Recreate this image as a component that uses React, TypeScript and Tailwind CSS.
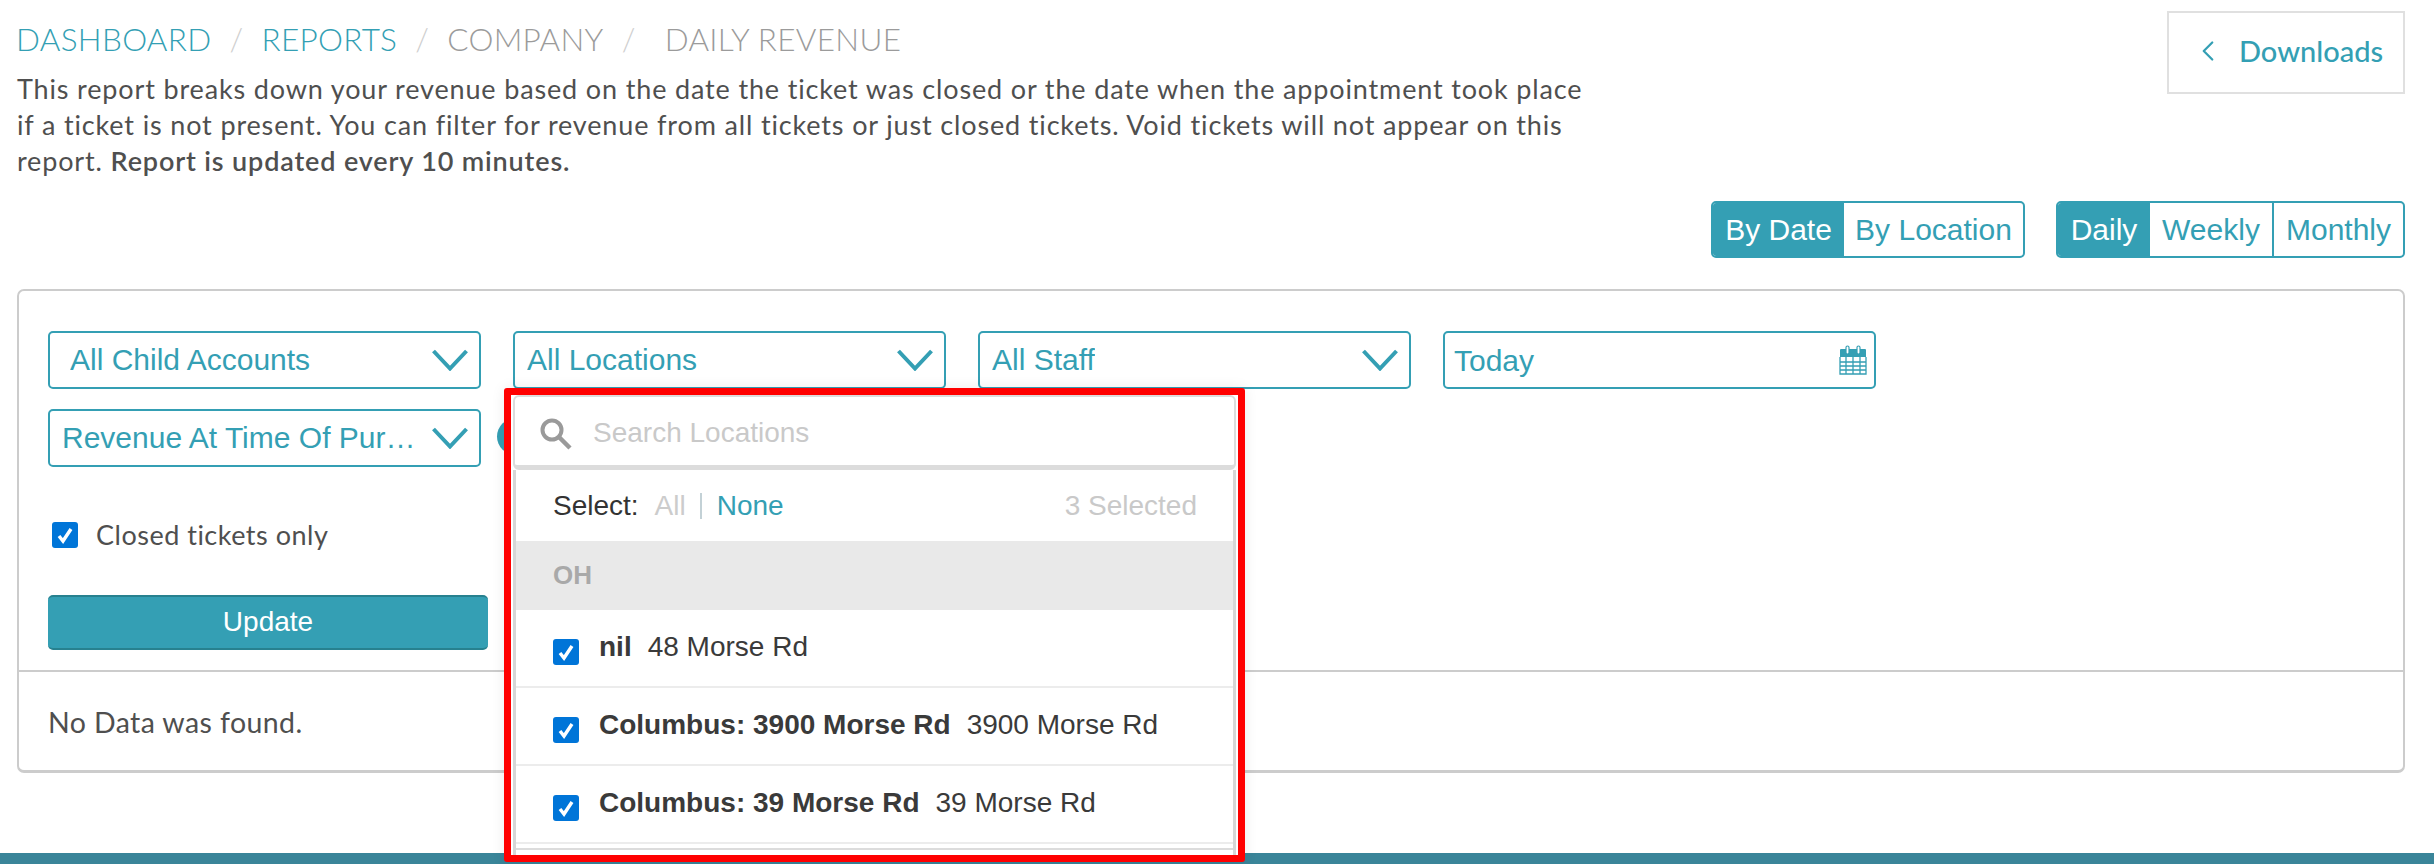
import { ChevronLeft } from "lucide-react";

const lato = "font-['Lato',sans-serif]";
const arial = "font-['Liberation_Sans',Arial,sans-serif]";

// thin "v" used on every dropdown
const Chevron = () => (
  <svg width="36" height="22" viewBox="0 0 36 22" fill="none" className="shrink-0">
    <path d="M1.5 2 L18 19.5 L34.5 2" stroke="#349fb4" strokeWidth="4" />
  </svg>
);

const Select = ({ label, pl }: { label: string; pl: string }) => (
  <div className={`flex h-[58px] w-[433px] items-center justify-between rounded-[5px] border-2 border-[#349fb4] pr-[11px] ${pl}`}>
    <span className={`${arial} mr-[14px] -mt-[2px] truncate text-[30px] text-[#349fb4]`}>{label}</span>
    <Chevron />
  </div>
);

const Calendar = () => (
  <svg width="28" height="30" viewBox="0 0 28 30" className="shrink-0">
    <path d="M1 5 Q1 4 2 4 H26 Q27 4 27 5 V12 H1 Z" fill="#349fb4" />
    <rect x="7" y="1" width="3" height="8" rx="1.5" fill="#fff" stroke="#349fb4" strokeWidth="1.2" />
    <rect x="18" y="1" width="3" height="8" rx="1.5" fill="#fff" stroke="#349fb4" strokeWidth="1.2" />
    <path d="M1 12 V29 H27 V12 M1 17 H27 M1 21 H27 M1 25 H27 M7 12 V29 M14 12 V29 M21 12 V29" fill="none" stroke="#349fb4" strokeWidth="1.3" />
  </svg>
);

const Check = ({ className = "" }: { className?: string }) => (
  <span className={`flex h-[26px] w-[26px] shrink-0 items-center justify-center rounded-[3px] bg-[#0075d8] ${className}`}>
    <svg width="18" height="18" viewBox="0 0 18 18" fill="none">
      <path d="M3 10 L7 15 L15 3" stroke="#fff" strokeWidth="3.4" />
    </svg>
  </span>
);

const Row = ({ name, addr }: { name: string; addr: string }) => (
  <div className="flex h-[78px] items-center gap-[20px] border-b-2 border-[#ececec] pl-[37px]">
    <Check className="mt-[8px]" />
    <span className={`${arial} -mt-[2px] text-[28px] text-[#3a3a3a]`}>
      <b>{name}</b>
      <span className="ml-[16px]">{addr}</span>
    </span>
  </div>
);

export default function App() {
  return (
    <div className="flex h-[864px] w-[2434px] flex-col overflow-hidden bg-white">
      <div className="relative flex-1 pl-[17px] pr-[29px]">
        {/* header */}
        <div className="flex items-start justify-between pt-[11px]">
          <div className="w-[1580px]">
            <div className={`${lato} mb-[2px] -ml-[1px] flex h-[58px] items-center text-[31.5px] font-light uppercase leading-none tracking-[0.3px] text-[#9b9b9b]`}>
              <a className="text-[#349fb4]">Dashboard</a>
              <span className="mx-[18px] text-[#cfcfcf]">/</span>
              <a className="text-[#349fb4]">Reports</a>
              <span className="mx-[18px] text-[#cfcfcf]">/</span>
              <span>Company</span>
              <span className="ml-[18px] mr-[29px] text-[#cfcfcf]">/</span>
              <span>Daily Revenue</span>
            </div>
            <p className={`${lato} text-[27px] leading-[36px] tracking-[0.85px] text-[#4f4f4f]`}>
              This report breaks down your revenue based on the date the ticket was closed or the date when the appointment took place if a ticket is not present. You can filter for revenue from all tickets or just closed tickets. Void tickets will not appear on this report. <b className="font-semibold">Report is updated every 10 minutes.</b>
            </p>
          </div>
          <button className={`${lato} flex h-[83px] w-[238px] items-center gap-[14px] border-2 border-[#e0e0e0] pb-[3px] pl-[22px] text-[29px] font-medium text-[#349fb4]`}>
            <ChevronLeft size={34} strokeWidth={1.6} className="shrink-0" />
            Downloads
          </button>
        </div>

        {/* toggles */}
        <div className={`${arial} mt-[22px] flex justify-end gap-[31px] text-[30px]`}>
          <div className="flex h-[57px] overflow-hidden rounded-[5px] border-2 border-[#349fb4]">
            <span className="flex w-[131px] items-center justify-center bg-[#349fb4] text-white">By Date</span>
            <span className="flex w-[179px] items-center justify-center text-[#349fb4]">By Location</span>
          </div>
          <div className="flex h-[57px] overflow-hidden rounded-[5px] border-2 border-[#349fb4]">
            <span className="flex w-[92px] items-center justify-center bg-[#349fb4] text-white">Daily</span>
            <span className="flex w-[124px] items-center justify-center border-r-2 border-[#349fb4] text-[#349fb4]">Weekly</span>
            <span className="flex w-[129px] items-center justify-center text-[#349fb4]">Monthly</span>
          </div>
        </div>

        {/* report card */}
        <div className="mt-[31px] h-[484px] rounded-[7px] border-2 border-b-[3px] border-[#cccccc]">
          <div className="h-[381px] border-b-2 border-[#cccccc] pl-[29px] pt-[40px]">
            <div className="flex gap-[32px]">
              <Select label="All Child Accounts" pl="pl-[20px]" />
              <Select label="All Locations" pl="pl-[12px]" />
              <Select label="All Staff" pl="pl-[12px]" />
              <div className="flex h-[58px] w-[433px] items-center justify-between rounded-[5px] border-2 border-[#349fb4] pl-[9px] pr-[7px]">
                <span className={`${arial} text-[30px] text-[#349fb4]`}>Today</span>
                <Calendar />
              </div>
            </div>
            <div className="mt-[20px] flex items-center gap-[16px]">
              <Select label="Revenue At Time Of Purchase" pl="pl-[12px]" />
              <span className={`${arial} -mt-[3px] flex h-[37px] w-[37px] items-center justify-center rounded-full bg-[#349fb4] text-[26px] font-bold text-white`}>?</span>
            </div>
            <label className={`${lato} mt-[48px] flex items-center gap-[18px] pl-[4px] text-[27px] tracking-[0.5px] text-[#4f4f4f]`}>
              <Check />
              Closed tickets only
            </label>
            <button className={`${arial} mt-[39px] block h-[55px] w-[440px] rounded-[5px] border-b-2 border-t-2 border-[#27818f] bg-[#349fb4] text-[28px] text-white`}>
              Update
            </button>
          </div>
          <p className={`${lato} pl-[29px] pt-[29px] text-[28.5px] tracking-[0.4px] text-[#4f4f4f]`}>No Data was found.</p>
        </div>

        {/* open locations dropdown with its red call-out */}
        <div className="absolute left-[504px] top-[388px] flex h-[474px] w-[741px] flex-col rounded-[3px] border-[7px] border-[#ff0000] bg-white pl-[2px] pr-[2px] shadow-[0_0_14px_rgba(0,0,0,0.08)]">
          <div className="flex h-[75px] shrink-0 items-center gap-[21px] rounded-[6px] border-2 border-b-[5px] border-[#dcdcdc] pl-[25px]">
            <svg width="32" height="32" viewBox="0 0 32 32" fill="none" className="mt-[6px] shrink-0">
              <circle cx="12" cy="12" r="9.5" stroke="#9a9a9a" strokeWidth="4" />
              <path d="M19 19 L30 30" stroke="#9a9a9a" strokeWidth="4.5" />
            </svg>
            <span className={`${arial} mt-[4px] text-[28px] text-[#c9c9c9]`}>Search Locations</span>
          </div>
          <div className="flex-1 border-x-[3px] border-[#d6d6d6] bg-white">
            <div className={`${arial} flex h-[71px] items-center justify-between pl-[37px] pr-[36px] text-[28px]`}>
              <div className="flex items-center">
                <span className="text-[#333333]">Select:</span>
                <span className="ml-[16px] text-[#cccccc]">All</span>
                <span className="ml-[14px] h-[26px] w-[2px] bg-[#c3d1d6]" />
                <span className="ml-[15px] text-[#349fb4]">None</span>
              </div>
              <span className="text-[#c9c9c9]">3 Selected</span>
            </div>
            <div className={`${arial} flex h-[69px] items-center bg-[#e9e9e9] pl-[37px] text-[26px] font-bold text-[#a9a9a9]`}>OH</div>
            <Row name="nil" addr="48 Morse Rd" />
            <Row name="Columbus: 3900 Morse Rd" addr="3900 Morse Rd" />
            <Row name="Columbus: 39 Morse Rd" addr="39 Morse Rd" />
            <div className="h-[6px] border-b-2 border-[#dcdcdc]" />
          </div>
        </div>
      </div>
      <div className="h-[11px] bg-[#3a8599]" />
    </div>
  );
}
